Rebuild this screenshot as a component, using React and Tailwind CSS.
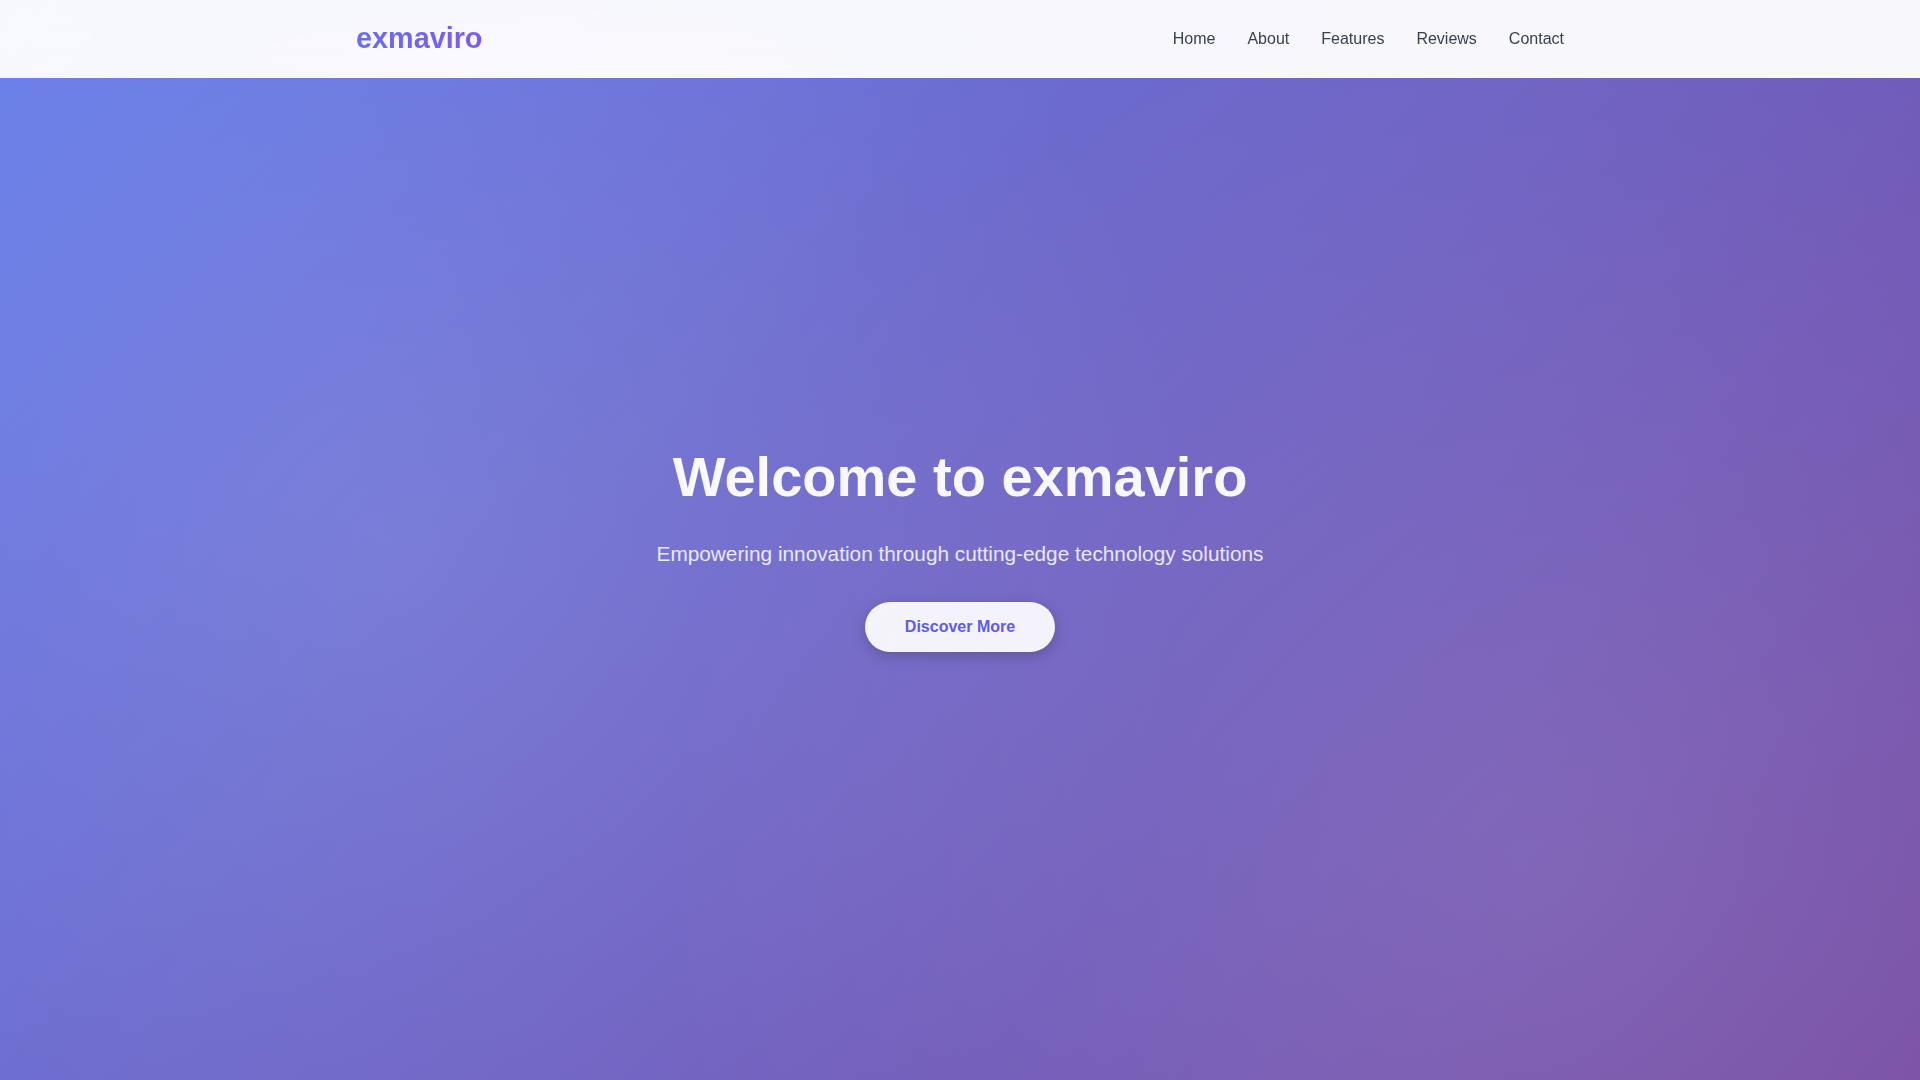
import React from 'react';

const links = ['Home', 'About', 'Features', 'Reviews', 'Contact'];

const Navbar = () => {
  return (
    <nav className="fixed top-0 inset-x-0 z-10 h-[78px] bg-white/95 backdrop-blur-md">
      <div className="max-w-[1240px] h-full mx-auto px-4 flex items-center justify-between">
        <a
          href="#"
          className="text-[1.8rem] font-bold bg-gradient-to-r from-[#6a6cf0] to-[#7b5cf0] bg-clip-text text-transparent"
        >
          exmaviro
        </a>
        <ul className="flex items-center gap-8">
          {links.map((link) => (
            <li key={link}>
              <a href="#" className="text-base text-[#374151] hover:text-[#667eea]">
                {link}
              </a>
            </li>
          ))}
        </ul>
      </div>
    </nav>
  );
};

const App = () => {
  return (
    <div
      className="relative min-h-screen font-['Liberation_Sans',Arial,sans-serif] bg-[radial-gradient(circle_at_20%_50%,rgba(255,255,255,0.1)_0%,transparent_50%),radial-gradient(circle_at_80%_80%,rgba(255,255,255,0.1)_0%,transparent_50%),linear-gradient(135deg,#667eea_0%,#764ba2_100%)]"
    >
      <Navbar />

      {/* Hero */}
      <main className="h-screen pt-[15px] flex flex-col items-center justify-center text-center">
        <h1 className="text-[3.5rem] leading-[1.2] font-bold text-white/95 mb-[28px]">
          Welcome to exmaviro
        </h1>
        <p className="text-[1.3rem] leading-[1.5] text-white/85 mb-[33px]">
          Empowering innovation through cutting-edge technology solutions
        </p>
        <button className="px-10 py-4 text-base leading-[18px] font-bold rounded-full bg-white/92 text-[#5e5ce6] shadow-[0_4px_15px_rgba(0,0,0,0.2)]">
          Discover More
        </button>
      </main>
    </div>
  );
};

export default App;
